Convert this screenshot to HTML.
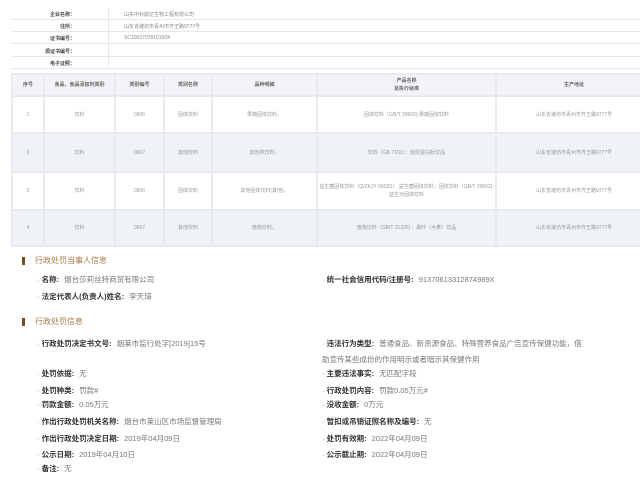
<!DOCTYPE html>
<html><head><meta charset="utf-8"><style>
*{margin:0;padding:0;box-sizing:border-box}
body{width:640px;height:483px;background:#fff;font-family:"Liberation Sans","Noto Sans CJK SC",sans-serif;position:relative;overflow:hidden}
.a{position:absolute;white-space:nowrap}
.top{position:absolute;left:11px;width:629px;border-bottom:1px solid #e6e8ec;height:12px}
.lb{position:absolute;right:565px;font-size:5px;font-weight:bold;color:#444;top:3px}
.vl{position:absolute;left:113px;font-size:5px;color:#888;top:3px}
table{position:absolute;left:11px;top:73px;border-collapse:collapse;width:640px;table-layout:fixed}
td{border:2px solid #e8eaee;font-size:5px;color:#999;text-align:center;vertical-align:middle;line-height:8px}
tr.h td{background:#f3f4f7;color:#666;font-weight:bold;height:22px}
tr.g td{background:#eff2f7}
.hd{position:absolute;left:35px;font-size:8px;color:#a87a4a}
.bar{position:absolute;left:22px;width:3px;height:8px;background:#7a4a1c}
.r{position:absolute;font-size:7.5px;color:#777;white-space:nowrap}
.r b{color:#333;font-weight:bold;margin-right:5px}
</style></head><body>
<div class="top" style="top:8px"><span class="lb">企业名称：</span><span class="vl">山东中科鼎亿生物工程有限公司</span></div>
<div class="top" style="top:20px"><span class="lb">住所：</span><span class="vl">山东省潍坊市青州市齐王路9777号</span></div>
<div class="top" style="top:32px"><span class="lb">证书编号：</span><span class="vl">SC10637078101504</span></div>
<div class="top" style="top:45px"><span class="lb">源证书编号：</span></div>
<div class="top" style="top:57px"><span class="lb">电子证照：</span></div>
<div style="position:absolute;left:108px;top:8px;width:1px;height:60px;background:#e6e8ec"></div>
<table>
<colgroup><col style="width:32px"><col style="width:71px"><col style="width:49px"><col style="width:48px"><col style="width:105px"><col style="width:179px"><col style="width:156px"></colgroup>
<tr class="h"><td>序号</td><td>食品、食品添加剂类别</td><td>类别编号</td><td>类别名称</td><td>品种明细</td><td>产品名称<br>及执行标准</td><td>生产地址</td></tr>
<tr style="height:37px"><td>1</td><td>饮料</td><td>0606</td><td>固体饮料</td><td>果蔬固体饮料。</td><td>固体饮料（GB/T 29602):果蔬固体饮料</td><td>山东省潍坊市青州市齐王路9777号</td></tr>
<tr class="g" style="height:39px"><td>2</td><td>饮料</td><td>0607</td><td>其他饮料</td><td>其他类饮料。</td><td>饮料（GB 7101）：胶原蛋白肽饮品</td><td>山东省潍坊市青州市齐王路9777号</td></tr>
<tr style="height:38px"><td>3</td><td>饮料</td><td>0606</td><td>固体饮料</td><td>其他固体饮料(其他)。</td><td>益生菌固体饮料（Q/ZKJY 0002S）:益生菌固体饮料；固体饮料（GB/T 29602):益生元固体饮料</td><td>山东省潍坊市青州市齐王路9777号</td></tr>
<tr class="g" style="height:36px"><td>4</td><td>饮料</td><td>0607</td><td>其他饮料</td><td>植物饮料。</td><td>植物饮料（GB/T 31326）：桑叶（木拳）饮品</td><td>山东省潍坊市青州市齐王路9777号</td></tr>
</table>
<div class="bar" style="top:257px"></div><div class="hd a" style="top:255px">行政处罚当事人信息</div>
<div class="r" style="left:37px;top:274px">· <b>名称:</b>烟台莎莉丝特商贸有限公司</div>
<div class="r" style="left:322px;top:274px">· <b>统一社会信用代码/注册号:</b>91370613312874989X</div>
<div class="r" style="left:37px;top:291px">· <b>法定代表人(负责人)姓名:</b>李天琦</div>
<div class="bar" style="top:318px"></div><div class="hd a" style="top:316px">行政处罚信息</div>
<div class="r" style="left:37px;top:338px">· <b>行政处罚决定书文号:</b>烟莱市监行处字[2019]15号</div>
<div class="r" style="left:322px;top:338px">· <b>违法行为类型:</b>普通食品、新资源食品、特殊营养食品广告宣传保健功能，借</div>
<div class="r" style="left:322px;top:354px">助宣传某些成份的作用明示或者暗示其保健作用</div>
<div class="r" style="left:37px;top:368px">· <b>处罚依据:</b>无</div>
<div class="r" style="left:322px;top:368px">· <b>主要违法事实:</b>无匹配字段</div>
<div class="r" style="left:37px;top:385px">· <b>处罚种类:</b>罚款#</div>
<div class="r" style="left:322px;top:385px">· <b>行政处罚内容:</b>罚款0.05万元#</div>
<div class="r" style="left:37px;top:399px">· <b>罚款金额:</b>0.05万元</div>
<div class="r" style="left:322px;top:399px">· <b>没收金额:</b>0万元</div>
<div class="r" style="left:37px;top:416px">· <b>作出行政处罚机关名称:</b>烟台市莱山区市场监督管理局</div>
<div class="r" style="left:322px;top:416px">· <b>暂扣或吊销证照名称及编号:</b>无</div>
<div class="r" style="left:37px;top:433px">· <b>作出行政处罚决定日期:</b>2019年04月09日</div>
<div class="r" style="left:322px;top:433px">· <b>处罚有效期:</b>2022年04月09日</div>
<div class="r" style="left:37px;top:449px">· <b>公示日期:</b>2019年04月10日</div>
<div class="r" style="left:322px;top:449px">· <b>公示截止期:</b>2022年04月09日</div>
<div class="r" style="left:37px;top:463px">· <b>备注:</b>无</div>
</body></html>
